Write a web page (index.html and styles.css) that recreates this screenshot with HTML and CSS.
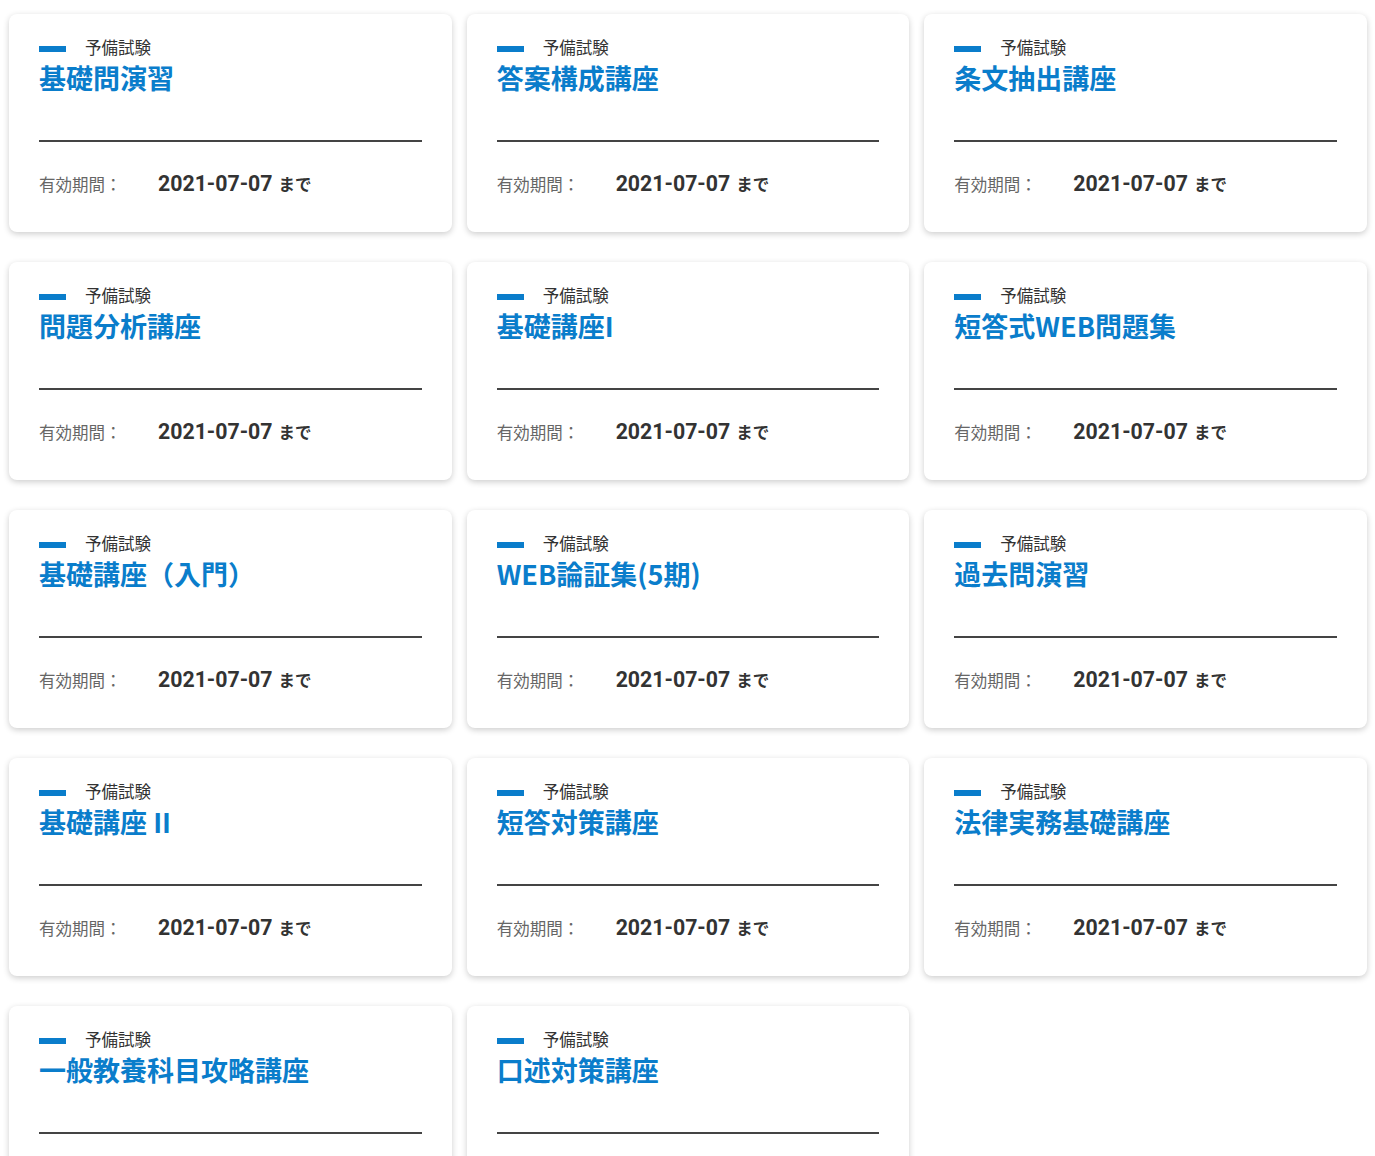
FILE: index.html
```html
<!DOCTYPE html>
<html lang="ja">
<head>
    <meta charset="UTF-8">
    <meta name="viewport" content="width=device-width, initial-scale=1.0">
    <title>受講講座一覧</title>
    <link rel="stylesheet" href="styles.css">
</head>
<body>
    <div class="course-list">
        <div class="card">
            <div class="card-head">
                <div class="category"><span class="bar"></span>予備試験</div>
                <div class="title">基礎問演習</div>
            </div>
            <div class="meta"><span class="label">有効期間：</span><span class="date">2021-07-07</span><span class="until">まで</span></div>
        </div>
        <div class="card">
            <div class="card-head">
                <div class="category"><span class="bar"></span>予備試験</div>
                <div class="title">答案構成講座</div>
            </div>
            <div class="meta"><span class="label">有効期間：</span><span class="date">2021-07-07</span><span class="until">まで</span></div>
        </div>
        <div class="card">
            <div class="card-head">
                <div class="category"><span class="bar"></span>予備試験</div>
                <div class="title">条文抽出講座</div>
            </div>
            <div class="meta"><span class="label">有効期間：</span><span class="date">2021-07-07</span><span class="until">まで</span></div>
        </div>
        <div class="card">
            <div class="card-head">
                <div class="category"><span class="bar"></span>予備試験</div>
                <div class="title">問題分析講座</div>
            </div>
            <div class="meta"><span class="label">有効期間：</span><span class="date">2021-07-07</span><span class="until">まで</span></div>
        </div>
        <div class="card">
            <div class="card-head">
                <div class="category"><span class="bar"></span>予備試験</div>
                <div class="title">基礎講座I</div>
            </div>
            <div class="meta"><span class="label">有効期間：</span><span class="date">2021-07-07</span><span class="until">まで</span></div>
        </div>
        <div class="card">
            <div class="card-head">
                <div class="category"><span class="bar"></span>予備試験</div>
                <div class="title">短答式WEB問題集</div>
            </div>
            <div class="meta"><span class="label">有効期間：</span><span class="date">2021-07-07</span><span class="until">まで</span></div>
        </div>
        <div class="card">
            <div class="card-head">
                <div class="category"><span class="bar"></span>予備試験</div>
                <div class="title">基礎講座（入門）</div>
            </div>
            <div class="meta"><span class="label">有効期間：</span><span class="date">2021-07-07</span><span class="until">まで</span></div>
        </div>
        <div class="card">
            <div class="card-head">
                <div class="category"><span class="bar"></span>予備試験</div>
                <div class="title">WEB論証集(5期)</div>
            </div>
            <div class="meta"><span class="label">有効期間：</span><span class="date">2021-07-07</span><span class="until">まで</span></div>
        </div>
        <div class="card">
            <div class="card-head">
                <div class="category"><span class="bar"></span>予備試験</div>
                <div class="title">過去問演習</div>
            </div>
            <div class="meta"><span class="label">有効期間：</span><span class="date">2021-07-07</span><span class="until">まで</span></div>
        </div>
        <div class="card">
            <div class="card-head">
                <div class="category"><span class="bar"></span>予備試験</div>
                <div class="title">基礎講座 II</div>
            </div>
            <div class="meta"><span class="label">有効期間：</span><span class="date">2021-07-07</span><span class="until">まで</span></div>
        </div>
        <div class="card">
            <div class="card-head">
                <div class="category"><span class="bar"></span>予備試験</div>
                <div class="title">短答対策講座</div>
            </div>
            <div class="meta"><span class="label">有効期間：</span><span class="date">2021-07-07</span><span class="until">まで</span></div>
        </div>
        <div class="card">
            <div class="card-head">
                <div class="category"><span class="bar"></span>予備試験</div>
                <div class="title">法律実務基礎講座</div>
            </div>
            <div class="meta"><span class="label">有効期間：</span><span class="date">2021-07-07</span><span class="until">まで</span></div>
        </div>
        <div class="card">
            <div class="card-head">
                <div class="category"><span class="bar"></span>予備試験</div>
                <div class="title">一般教養科目攻略講座</div>
            </div>
            <div class="meta"><span class="label">有効期間：</span><span class="date">2021-07-07</span><span class="until">まで</span></div>
        </div>
        <div class="card">
            <div class="card-head">
                <div class="category"><span class="bar"></span>予備試験</div>
                <div class="title">口述対策講座</div>
            </div>
            <div class="meta"><span class="label">有効期間：</span><span class="date">2021-07-07</span><span class="until">まで</span></div>
        </div>
    </div>
</body>
</html>
```

FILE: styles.css
```css
body {
    margin: 0;
    padding: 0;
    background-color: #fff;
    color: #333;
    font-family: Roboto, "Noto Sans CJK JP", sans-serif;
}
.course-list {
    display: grid;
    grid-template-columns: repeat(3, 1fr);
    column-gap: 15px;
    row-gap: 30px;
    padding: 14px 8px 30px 9px;
}
.card {
    background-color: #fff;
    border-radius: 8px;
    box-shadow: 0 2px 6px rgba(0, 0, 0, 0.2);
    padding: 25px 30px 33px;
}
.card-head {
    padding-bottom: 44px;
    border-bottom: 2px solid #444;
}
.category {
    display: flex;
    align-items: center;
    height: 20px;
    font-size: 16.5px;
    line-height: 20px;
    color: #333;
}
.bar {
    width: 27px;
    height: 6px;
    margin-right: 19px;
    background-color: #0a7dcb;
}
.title {
    margin-top: 1px;
    height: 36px;
    font-family: "Noto Sans CJK JP", sans-serif;
    font-size: 27px;
    line-height: 36px;
    font-weight: bold;
    color: #0a7dcb;
}
.meta {
    display: flex;
    align-items: baseline;
    height: 30px;
    margin-top: 27px;
    line-height: 30px;
}
.label {
    width: 119px;
    font-size: 16.5px;
    color: #666;
}
.date {
    font-size: 21.3px;
    font-weight: bold;
    color: #333;
}
.until {
    margin-left: 6px;
    font-size: 16.5px;
    font-weight: bold;
    color: #333;
}
```
